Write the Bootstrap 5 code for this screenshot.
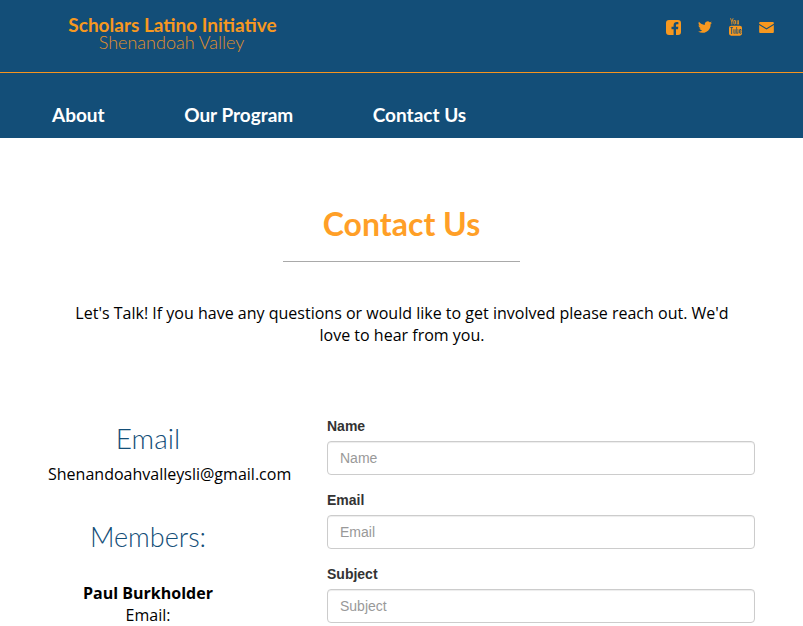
<!DOCTYPE html>
<html lang="en">
<head>
<meta charset="utf-8">
<title>Contact Us</title>
<link href="https://cdn.jsdelivr.net/npm/bootstrap@5.3.0/dist/css/bootstrap.min.css" rel="stylesheet">
<style>
html,body{height:626px;overflow:hidden}
body{font-family:"Open Sans",sans-serif;font-size:16px;color:#000;background:#fff}
.site-head{background:#134e78}
.brand-bar{height:73px;border-bottom:1px solid #f7941e;padding:15px 29px 0 68px}
.brand-main{font-family:Lato,sans-serif;font-weight:700;font-size:19px;line-height:19px;color:#f7981f;width:209px;text-align:center;white-space:nowrap}
.brand-sub{font-family:Lato,sans-serif;font-weight:300;font-size:18px;line-height:17px;color:#e2912b;text-align:center;white-space:nowrap;padding-right:2px}
.social{height:18px;gap:17px;margin-top:3px}
.social svg{display:block;fill:#f7981f}
.main-nav{height:65px;padding-left:52px;gap:79.5px;padding-top:32px}
.main-nav a{font-family:Lato,sans-serif;font-weight:700;font-size:19px;line-height:20px;color:#fff;text-decoration:none}
.page-title{font-family:Lato,sans-serif;font-weight:700;font-size:32px;line-height:36px;color:#ff9f27;margin:68px 0 0;text-align:center}
.title-rule{width:237px;height:1px;background:#a9a9a9;margin:19px auto 0 283px}
.intro{width:662px;margin:40px 0 0 71px;line-height:22px;text-align:center;font-size:16.03px}
.contact-row{margin-top:70px;padding-left:48px}
.side{width:200px;flex:none;text-align:center}
.side-title{font-family:Lato,sans-serif;font-weight:300;font-size:28px;line-height:30px;color:#134e78;margin:0}
.email-title{padding-top:7px}
.mail{margin:10px 0 0;line-height:22px;font-size:16.03px}
.members{margin-top:37px;font-size:27px}
.person{margin:30px 0 0;line-height:22px}
.person b{display:block}
.form-side{width:428px;flex:none;margin-left:79px;font-family:"Liberation Sans",sans-serif}
.field{margin-bottom:15px}
.field-label{display:block;font-weight:700;font-size:14px;line-height:20px;color:#333;margin-bottom:5px}
.field-input{height:34px;padding:6px 12px;font-size:14px;line-height:20px;border:1px solid #ccc;border-radius:4px;color:#555;box-shadow:inset 0 1px 1px rgba(0,0,0,.075)}
.field-input::placeholder{color:#999;opacity:1}
</style>
</head>
<body>
<header class="site-head">
  <div class="brand-bar d-flex justify-content-between align-items-start">
    <div>
      <div class="brand-main">Scholars Latino Initiative</div>
      <div class="brand-sub">Shenandoah Valley</div>
    </div>
    <div class="social d-flex align-items-center">
      <svg width="15" height="15" viewBox="0 0 15 15"><path d="M3 0h9a3 3 0 0 1 3 3v9a3 3 0 0 1-3 3h-2V9.200h2l.3-2.400H10V5.400c0-.7.2-1.100 1.100-1.100h1.300V2.200c-.5-.1-1-.1-1.700-.1-1.800 0-3.100 1.100-3.100 3.100v1.600H5.500v2.400h2.100V15H3a3 3 0 0 1-3-3V3a3 3 0 0 1 3-3z"/></svg>
      <svg width="14" height="12" viewBox="0 0 16 13"><path d="M16 1.600c-.6.3-1.200.4-1.900.5.700-.4 1.200-1 1.400-1.800-.6.4-1.300.7-2.100.8A3.300 3.300 0 0 0 7.800 4.100C5.100 4 2.700 2.700 1.100.6.200 2.100.6 4 2.100 5c-.5 0-1-.2-1.500-.4 0 1.600 1.100 3 2.600 3.300-.5.100-1 .1-1.500 0 .4 1.300 1.600 2.200 3.100 2.300A6.600 6.600 0 0 1 0 11.500 9.300 9.300 0 0 0 14.400 3.300c.6-.4 1.200-1 1.600-1.700z"/></svg>
      <svg width="13" height="18" viewBox="0 0 15 20"><path d="M2.300 0l1 3 1-3h1l-1.500 4.200V7h-1V4.200L1.300 0zM6.500 2c.9 0 1.400.5 1.400 1.300v2.500C7.900 6.600 7.400 7 6.500 7s-1.400-.4-1.400-1.200V3.300C5.100 2.500 5.600 2 6.500 2zm0 .9c-.3 0-.4.200-.4.400v2.600c0 .2.100.4.400.4s.4-.2.400-.4V3.300c0-.2-.1-.4-.4-.4zM9 2.100h.9v3.900c0 .3.400.2.600-.1V2.100h.9V7h-.9v-.5c-.6.700-1.500.7-1.500-.2z"/><path fill-rule="evenodd" d="M2.500 8.500h10A2.500 2.500 0 0 1 15 11v6.500a2.500 2.500 0 0 1-2.500 2.500h-10A2.500 2.500 0 0 1 0 17.500V11a2.500 2.500 0 0 1 2.500-2.500zM1.500 10v1h1.100v7h1v-7h1.100v-1zm3.700 2.500v4.400c0 .9.900.9 1.500.3v.5h.8v-5.200h-.8v4c-.2.300-.7.400-.7.100v-4.100zm3.300-2.500v7.700h.8v-.4c.7.700 1.500.4 1.500-.5v-3.200c0-1-.8-1.300-1.500-.6V10zm.8 3.100c.3-.3.700-.2.700.2v3c0 .4-.4.500-.7.200zm3.800-.700c-.8 0-1.300.500-1.300 1.300v2.700c0 .8.500 1.300 1.300 1.300s1.200-.5 1.200-1.300v-.5h-.8v.5c0 .7-.8.700-.8 0v-1.300h1.600v-1.400c0-.8-.4-1.300-1.200-1.300zm0 .7c.3 0 .4.200.4.600v.6h-.8v-.6c0-.4.100-.6.400-.6z"/></svg>
      <svg width="15" height="11" viewBox="0 0 16 12"><path d="M1 0h14a1 1 0 0 1 1 1v.8L8 6.800 0 1.800V1a1 1 0 0 1 1-1zM0 3.300l8 5 8-5V11a1 1 0 0 1-1 1H1a1 1 0 0 1-1-1z"/></svg>
    </div>
  </div>
  <nav class="main-nav d-flex">
    <a href="#">About</a>
    <a href="#">Our Program</a>
    <a href="#">Contact Us</a>
  </nav>
</header>
<main>
  <h1 class="page-title">Contact Us</h1>
  <div class="title-rule"></div>
  <p class="intro">Let's Talk! If you have any questions or would like to get involved please reach out. We'd love to hear from you.</p>
  <div class="contact-row d-flex">
    <div class="side">
      <h2 class="side-title email-title">Email</h2>
      <p class="mail">Shenandoahvalleysli@gmail.com</p>
      <h2 class="side-title members">Members:</h2>
      <p class="person"><b>Paul Burkholder</b>Email:</p>
    </div>
    <form class="form-side">
      <div class="field"><label class="field-label" for="n">Name</label><input class="form-control field-input" id="n" placeholder="Name"></div>
      <div class="field"><label class="field-label" for="e">Email</label><input class="form-control field-input" id="e" placeholder="Email"></div>
      <div class="field"><label class="field-label" for="s">Subject</label><input class="form-control field-input" id="s" placeholder="Subject"></div>
    </form>
  </div>
</main>
<script src="https://cdn.jsdelivr.net/npm/bootstrap@5.3.0/dist/js/bootstrap.bundle.min.js"></script>
</body>
</html>
